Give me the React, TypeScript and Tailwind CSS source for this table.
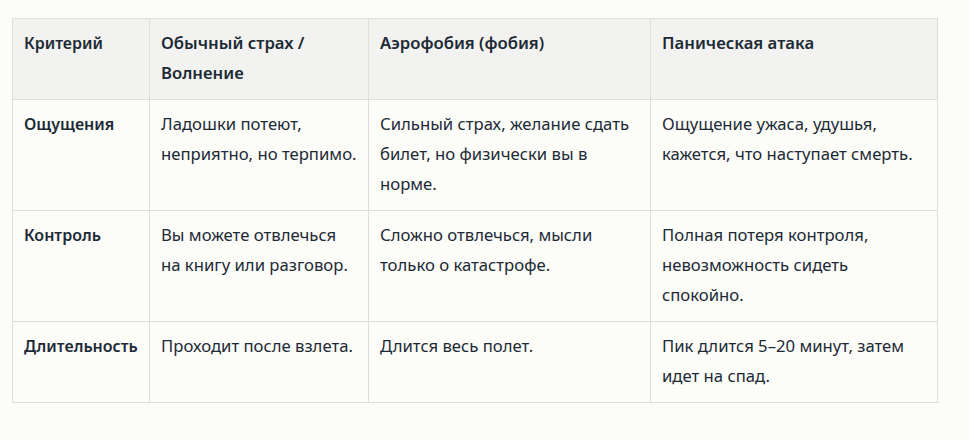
const headers = ['Критерий', 'Обычный страх / Волнение', 'Аэрофобия (фобия)', 'Паническая атака']

const rows = [
  [
    'Ощущения',
    'Ладошки потеют, неприятно, но терпимо.',
    'Сильный страх, желание сдать билет, но физически вы в норме.',
    'Ощущение ужаса, удушья, кажется, что наступает смерть.',
  ],
  [
    'Контроль',
    'Вы можете отвлечься на книгу или разговор.',
    'Сложно отвлечься, мысли только о катастрофе.',
    'Полная потеря контроля, невозможность сидеть спокойно.',
  ],
  [
    'Длительность',
    'Проходит после взлета.',
    'Длится весь полет.',
    'Пик длится 5–20 минут, затем идет на спад.',
  ],
]

export default function App() {
  return (
    <div className="min-h-[440px] bg-[#fcfcf9] pl-3 pt-[18px] font-['Noto_Sans',sans-serif] text-[16.7px] leading-[30px] text-[#1c2a35]">
      <table className="w-[926px] table-fixed border-collapse">
        <colgroup>
          <col className="w-[137px]" />
          <col className="w-[219px]" />
          <col className="w-[282px]" />
          <col className="w-[287px]" />
        </colgroup>
        <thead>
          <tr className="bg-[#f2f2f0]">
            {headers.map((h, i) => (
              <th
                key={h}
                className={`border border-[#dddddd] px-[11px] pt-[9px] pb-[11px] text-left align-top font-semibold ${i === 0 ? 'text-[16px]' : ''}`}
              >
                {h}
              </th>
            ))}
          </tr>
        </thead>
        <tbody>
          {rows.map((row) => (
            <tr key={row[0]}>
              {row.map((cell, i) => (
                <td
                  key={i}
                  className={`border border-[#dddddd] px-[11px] pt-[9px] pb-[11px] align-top ${i === 0 ? 'text-[16px] font-semibold' : ''}`}
                >
                  {cell}
                </td>
              ))}
            </tr>
          ))}
        </tbody>
      </table>
    </div>
  )
}
